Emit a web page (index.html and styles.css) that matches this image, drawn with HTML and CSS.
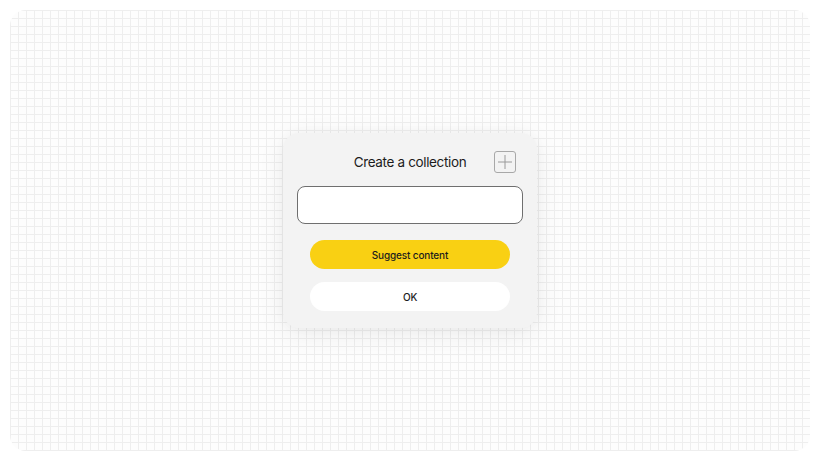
FILE: index.html
```html
<!DOCTYPE html>
<html lang="en">
<head>
  <meta charset="UTF-8" />
  <meta name="viewport" content="width=device-width, initial-scale=1" />
  <title>Create a collection</title>
  <link rel="stylesheet" href="styles.css">
</head>
<body>
  <div class="canvas">
    <div class="dialog">
      <div class="dialog-head">
        <h1>Create a collection</h1>
        <button class="add" title="Add">
          <svg width="14" height="14" viewBox="0 0 14 14">
            <path d="M7 0 V14 M0 7 H14" stroke="#9a9a9a" stroke-width="1" fill="none" />
          </svg>
        </button>
      </div>
      <input type="text" class="name" />
      <div class="actions">
        <button class="btn suggest">Suggest content</button>
        <button class="btn ok">OK</button>
      </div>
    </div>
  </div>
</body>
</html>
```

FILE: styles.css
```css
*, *::before, *::after {
  box-sizing: border-box;
}

body {
  margin: 0;
  padding: 10px;
  height: 461px;
  background: #fff;
  font-family: 'Inter', 'Liberation Sans', sans-serif;
  color: #1c1c1c;
}

/* Fundo quadriculado */
.canvas {
  height: 441px;
  border-radius: 16px;
  background-color: #fdfdfd;
  background-image:
    linear-gradient(to right, #eeeeee 1px, transparent 1px),
    linear-gradient(to bottom, #eeeeee 1px, transparent 1px);
  background-size: 8px 8px;
  display: flex;
  justify-content: center;
  align-items: center;
}

.dialog {
  width: 254px;
  margin-top: 0;
  background: #f3f3f3;
  border-radius: 16px;
  box-shadow: 0 6px 28px rgba(0, 0, 0, 0.07), 0 0 12px rgba(0, 0, 0, 0.03);
  padding: 18px 14px 17px;
}

.dialog-head {
  position: relative;
  height: 22px;
  display: flex;
  align-items: center;
  justify-content: center;
}

h1 {
  margin: 0;
  font-size: 13.5px;
  font-weight: 400;
  letter-spacing: -0.35px;
}

.add {
  position: absolute;
  right: 7px;
  top: 0;
  width: 22px;
  height: 22px;
  padding: 0;
  border: 1px solid #a8a8a8;
  border-radius: 3px;
  background: #f3f3f3;
  display: flex;
  align-items: center;
  justify-content: center;
}

.name {
  display: block;
  width: 100%;
  height: 38px;
  margin-top: 13px;
  border: 1px solid #6f6f6f;
  border-radius: 8px;
  background: #fff;
}

.actions {
  display: flex;
  flex-direction: column;
  align-items: center;
  gap: 13px;
  margin-top: 16px;
}

.btn {
  width: 200px;
  height: 29px;
  border: none;
  border-radius: 15px;
  font-family: inherit;
  font-size: 10px;
  font-weight: 500;
  letter-spacing: -0.15px;
  color: #1c1c1c;
}

.suggest {
  background: #f9d013;
}

.ok {
  background: #fff;
}
```
